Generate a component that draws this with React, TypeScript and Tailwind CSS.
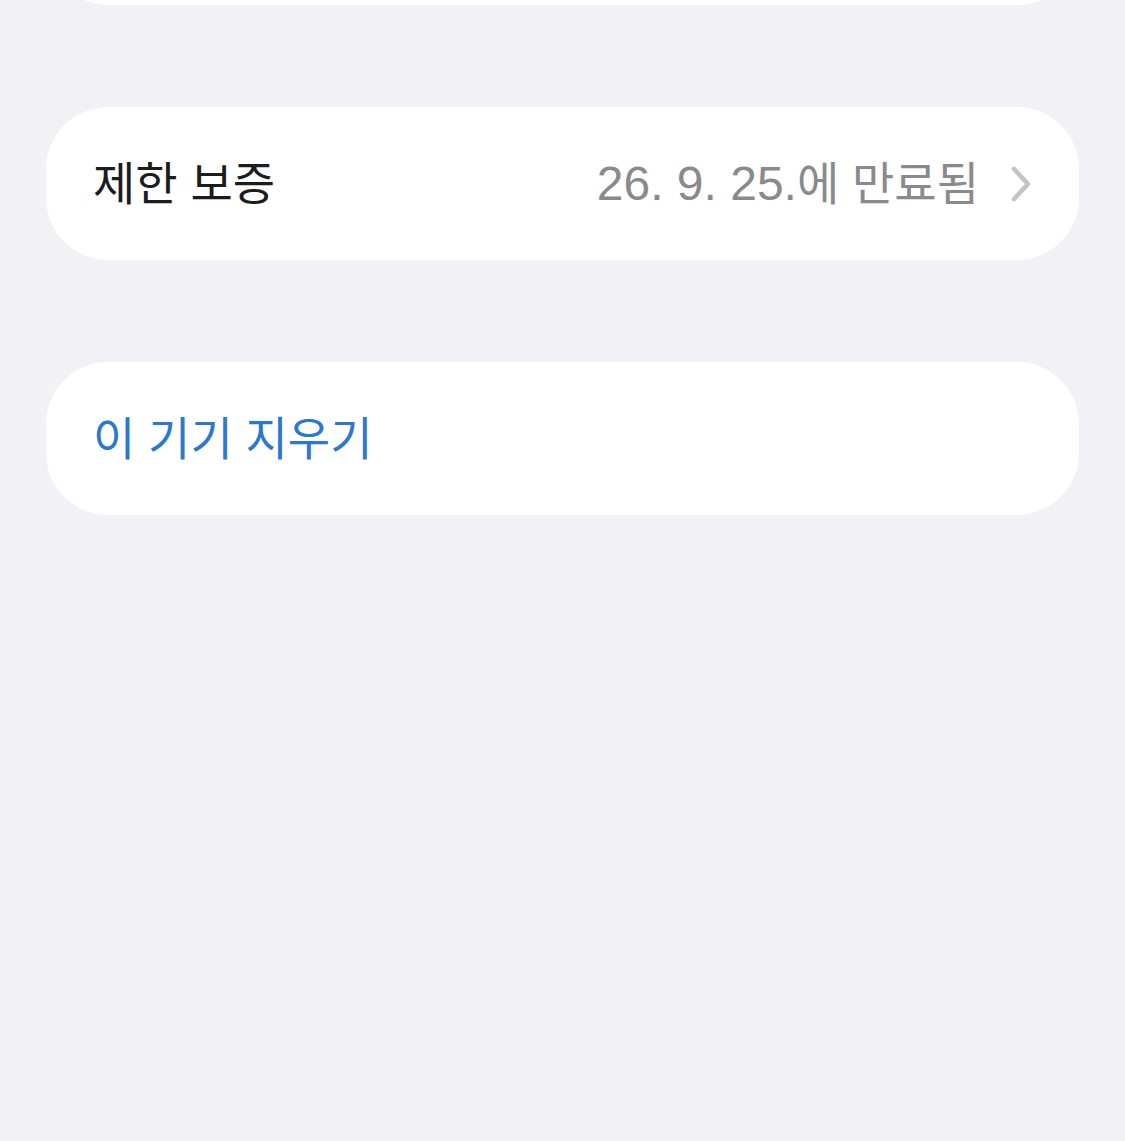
const font = { fontFamily: '"Liberation Sans", "Noto Sans CJK KR", "Noto Sans", sans-serif' };

function Chevron() {
  return (
    <svg width="24" height="38" viewBox="0 0 24 38" fill="none" className="shrink-0">
      <path d="M5 4 L19 19 L5 34" stroke="#c4c4c8" strokeWidth="4.5" strokeLinecap="round" strokeLinejoin="round" />
    </svg>
  );
}

export default function App() {
  return (
    <div className="min-h-[1141px] w-[1125px] overflow-hidden bg-[#f1f1f6] px-[46px]" style={font}>
      {/* partially scrolled card above */}
      <div className="-mt-[148px] h-[153px] rounded-[62px] bg-white" />

      <div className="mt-[102px] flex h-[153px] items-center rounded-[62px] bg-white pt-[1px] pl-[47px] pr-[46px]">
        <span className="text-[46px] leading-none text-[#1c1c1e]">제한 보증</span>
        <span className="ml-auto mr-[30px] text-[46px] leading-none text-[#8a8a8e]">
          <span className="text-[48px]">26. 9. 25.</span>에 만료됨
        </span>
        <Chevron />
      </div>

      <div className="mt-[102px] flex h-[153px] items-center rounded-[62px] bg-white pt-[1px] pl-[47px]">
        <span className="text-[46px] leading-none text-[#2a78d0]">이 기기 지우기</span>
      </div>
    </div>
  );
}
